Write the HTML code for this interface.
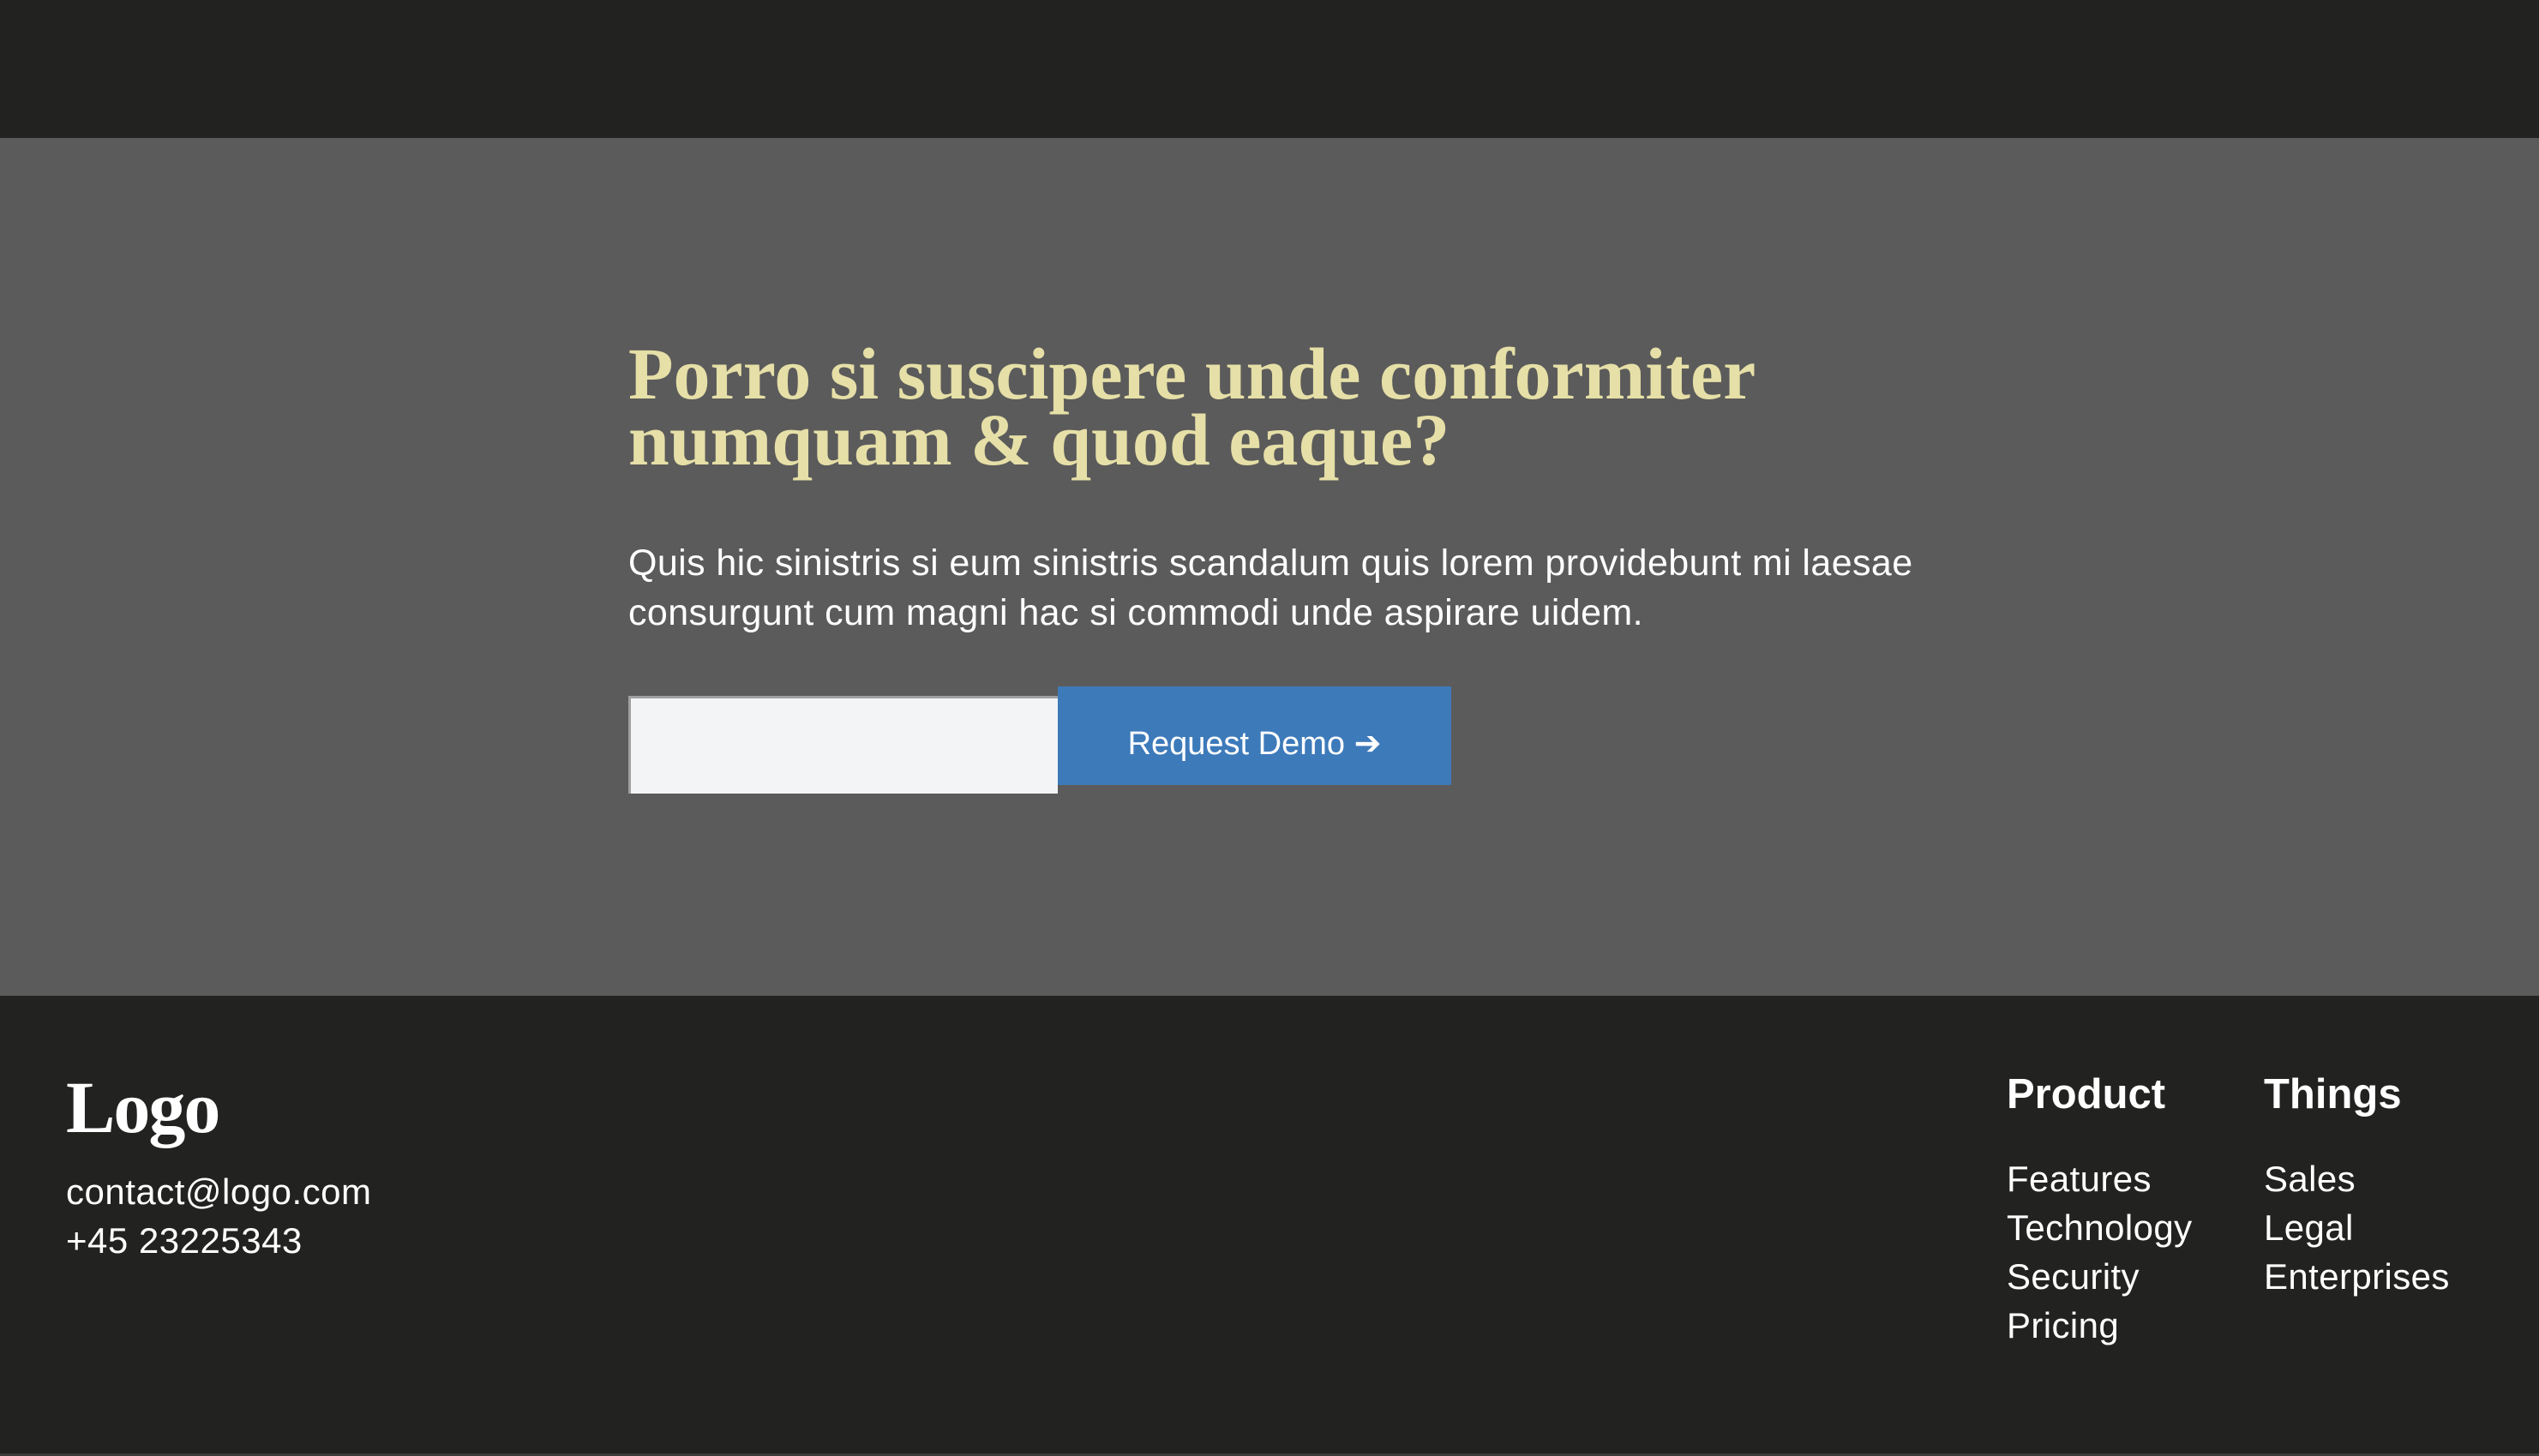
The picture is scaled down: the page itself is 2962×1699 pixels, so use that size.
<!DOCTYPE html>
<html><head><meta charset="utf-8"><style>
html,body{margin:0;padding:0;}
body{width:2962px;height:1699px;position:relative;overflow:hidden;background:#222220;font-family:"Liberation Sans",sans-serif;}
.top{position:absolute;left:0;top:0;width:2962px;height:161px;background:#222220;}
.mid{position:absolute;left:0;top:161px;width:2962px;height:1001px;background:#5b5b5b;}
h1{position:absolute;left:733px;top:398px;margin:0;font-family:"Liberation Serif",serif;font-weight:bold;font-size:86px;line-height:77px;color:#e6dfa7;letter-spacing:0px;white-space:nowrap;}
p.lead{position:absolute;left:733px;top:628px;margin:0;font-size:43px;line-height:58px;color:#fff;white-space:nowrap;letter-spacing:0.4px;}
.inp{position:absolute;left:733px;top:812px;width:498px;height:111px;background:#f3f4f6;border-top:3px solid #a0a0a0;border-left:3px solid #a0a0a0;}
.btn{position:absolute;left:1234px;top:801px;width:459px;height:115px;background:#3d7aba;color:#fff;font-size:38px;line-height:115px;text-align:center;}
.btn span{position:relative;top:10px;}
.footer{position:absolute;left:0;top:1162px;width:2962px;height:537px;background:#222220;color:#fff;}
.logo{position:absolute;left:77px;top:80px;font-family:"Liberation Serif",serif;font-weight:bold;font-size:86px;line-height:100px;letter-spacing:-2px;}
.contact{position:absolute;left:77px;top:200px;font-size:42px;line-height:57px;letter-spacing:0.5px;}
.col{position:absolute;top:80px;}
.col h3{margin:0;font-size:49px;font-weight:bold;line-height:70px;}
.col div{font-size:42px;line-height:57px;letter-spacing:0.4px;}
.col .items{margin-top:35px;}
.edge{position:absolute;left:0;bottom:0;width:2962px;height:3px;background:#3c3c3c;}
</style></head><body>
<div class="top"></div>
<div class="mid"></div>
<h1>Porro si suscipere unde conformiter<br>numquam &amp; quod eaque?</h1>
<p class="lead">Quis hic sinistris si eum sinistris scandalum quis lorem providebunt mi laesae<br>consurgunt cum magni hac si commodi unde aspirare uidem.</p>
<div class="inp"></div>
<div class="btn"><span>Request Demo ➔</span></div>
<div class="footer">
<div class="logo">Logo</div>
<div class="contact">contact@logo.com<br>+45 23225343</div>
<div class="col" style="left:2341px"><h3>Product</h3><div class="items"><div>Features</div><div>Technology</div><div>Security</div><div>Pricing</div></div></div>
<div class="col" style="left:2641px"><h3>Things</h3><div class="items"><div>Sales</div><div>Legal</div><div>Enterprises</div></div></div>
<div class="edge"></div>
</div>
</body></html>
